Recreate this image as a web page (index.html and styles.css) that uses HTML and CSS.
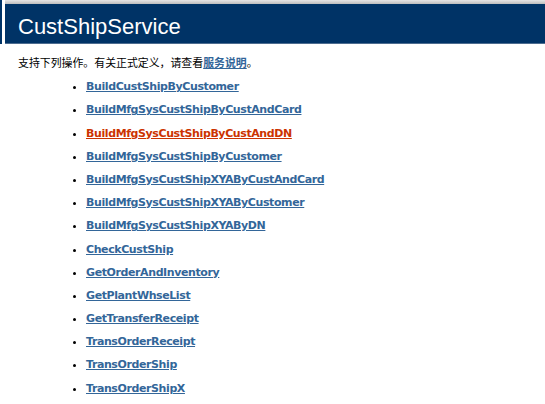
FILE: index.html
```html
<!DOCTYPE html>
<html>
<head>
<meta charset="utf-8">
<title>CustShipService</title>
<link rel="stylesheet" href="styles.css">
</head>
<body>
<div class="header">
  <div class="strip"></div>
  <div class="band"><h1 class="heading1">CustShipService</h1></div>
</div>
<div class="content">
  <p class="intro">支持下列操作。有关正式定义，请查看<a href="#">服务说明</a>。</p>
  <ul class="ops">
    <li><a href="#">BuildCustShipByCustomer</a></li>
    <li><a href="#">BuildMfgSysCustShipByCustAndCard</a></li>
    <li><a href="#" class="hover">BuildMfgSysCustShipByCustAndDN</a></li>
    <li><a href="#">BuildMfgSysCustShipByCustomer</a></li>
    <li><a href="#">BuildMfgSysCustShipXYAByCustAndCard</a></li>
    <li><a href="#">BuildMfgSysCustShipXYAByCustomer</a></li>
    <li><a href="#">BuildMfgSysCustShipXYAByDN</a></li>
    <li><a href="#">CheckCustShip</a></li>
    <li><a href="#">GetOrderAndInventory</a></li>
    <li><a href="#">GetPlantWhseList</a></li>
    <li><a href="#">GetTransferReceipt</a></li>
    <li><a href="#">TransOrderReceipt</a></li>
    <li><a href="#">TransOrderShip</a></li>
    <li><a href="#">TransOrderShipX</a></li>
  </ul>
</div>
</body>
</html>
```
FILE: styles.css
```css
html, body {
  margin: 0;
  padding: 0;
  background: #ffffff;
  color: #000000;
  font-family: "DejaVu Sans", Verdana, "Noto Sans CJK SC", sans-serif;
}

.header {
  display: flex;
  height: 44px;
}

.strip {
  width: 2px;
  background: #003366;
  margin-right: 3px;
}

.band {
  flex: 1;
  background: linear-gradient(#e6e6e6, #bdbdbd) top / 100% 4px no-repeat, #003366;
  padding-top: 4px;
  border-bottom: 1px solid #4d6c8f;
  box-sizing: border-box;
}

.heading1 {
  margin: 0;
  padding-left: 13px;
  color: #ffffff;
  font-family: "Liberation Sans", Tahoma, sans-serif;
  font-weight: normal;
  font-size: 22px;
  line-height: 26px;
  padding-top: 10px;
}

.content {
  padding-left: 18px;
}

.intro {
  margin: 13px 0 0 0;
  font-size: 10.9px;
  line-height: 14px;
  font-family: "DejaVu Sans", "Noto Sans CJK SC", sans-serif;
}

.intro a {
  color: #336699;
  font-weight: bold;
  text-decoration: underline;
}

.ops {
  margin: 0;
  padding: 0 0 0 68px;
  list-style: disc;
}

.ops li {
  margin-top: 9.2px;
  line-height: 14px;
  font-size: 11px;
}

.ops a {
  color: #336699;
  font-weight: bold;
  letter-spacing: -0.4px;
  text-decoration: underline;
}

.ops a.hover {
  color: #cc3300;
}
```
